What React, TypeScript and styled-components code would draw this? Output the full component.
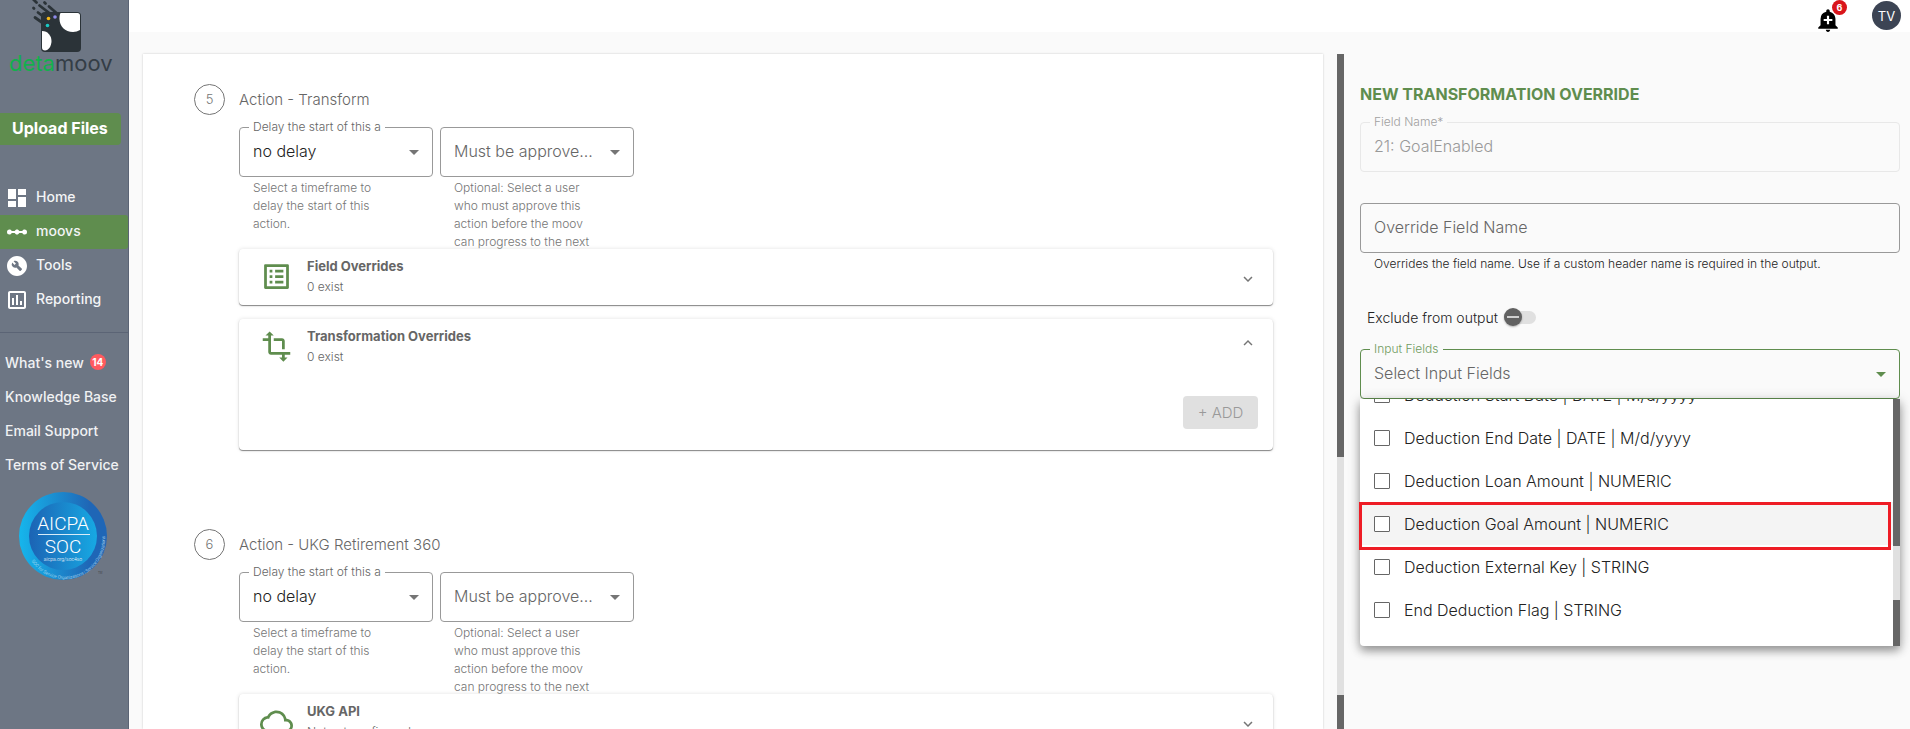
import React from "react";
import styled, { createGlobalStyle, css } from "styled-components";
import {
  MdDashboard,
  MdLinearScale,
  MdBuildCircle,
  MdOutlineAssessment,
  MdOutlineListAlt,
  MdTransform,
  MdCloudQueue,
  MdAddAlert,
  MdExpandMore,
  MdExpandLess,
} from "react-icons/md";

const green = "#5f8d4e";
const slate = "#6d7684";
const canvas = "#fafafa";

const GlobalStyle = createGlobalStyle`
  *, *::before, *::after { box-sizing: border-box; }
  body {
    margin: 0;
    background: ${canvas};
    color: #333;
    font-family: Inter, "Open Sans", sans-serif;
    font-size: 14px;
    font-weight: 300;
  }
  button, input, select { font: inherit; }
  h1, h2, h3, p, ul { margin: 0; padding: 0; }
  ul { list-style: none; }
`;

const Page = styled.div`
  display: flex;
  height: 100vh;
  overflow: hidden;
`;

/* ---------- sidebar ---------- */

const Sidebar = styled.aside`
  flex: none;
  width: 129px;
  display: flex;
  flex-direction: column;
  align-items: flex-start;
  background: ${slate};
  border-right: 1px solid #5b6475;
`;

const Brand = styled.a`
  display: block;
  width: 100%;
  height: 113px;
  text-decoration: none;
`;

const UploadButton = styled.button`
  width: 121px;
  height: 32px;
  padding: 0 0 2px 12px;
  border: 0;
  border-radius: 0 4px 4px 0;
  background: ${green};
  color: #fff;
  font-size: 16px;
  font-weight: 700;
  text-align: left;
  white-space: nowrap;
`;

const NavList = styled.ul`
  width: 100%;
  margin-top: 36px;
  padding-bottom: 15px;
  border-bottom: 1px solid #5b6475;
`;

const NavLink = styled.a<{ $active?: boolean }>`
  display: flex;
  align-items: center;
  gap: 7px;
  height: 34px;
  padding-left: 5px;
  border-radius: 0 3px 3px 0;
  background: ${(p) => (p.$active ? green : "transparent")};
  color: #f3f4f6;
  font-weight: 500;
  text-decoration: none;

  svg {
    flex: none;
    color: #fff;
  }
  span {
    padding-bottom: 4px;
  }
`;

const HelpList = styled.ul`
  margin-top: 12px;
  padding-left: 5px;
`;

const HelpLink = styled.a`
  display: flex;
  align-items: center;
  gap: 6px;
  height: 34px;
  color: #f0f1f3;
  font-size: 14px;
  font-weight: 500;
  text-decoration: none;
  white-space: nowrap;
`;

const NewCount = styled.span`
  width: 16px;
  height: 16px;
  border-radius: 50%;
  background: #ff5a5f;
  color: #fff;
  font-size: 10px;
  font-weight: 700;
  line-height: 16px;
  text-align: center;
`;

const SealLink = styled.a`
  display: block;
  margin: 9px 0 0 17px;
`;

/* ---------- frame ---------- */

const Main = styled.div`
  flex: 1;
  min-width: 0;
  display: flex;
  flex-direction: column;
`;

const TopBar = styled.header`
  flex: none;
  display: flex;
  justify-content: flex-end;
  align-items: flex-start;
  gap: 31px;
  height: 32px;
  padding-right: 9px;
  background: #fff;
`;

const AlertButton = styled.button`
  position: relative;
  width: 26px;
  height: 32px;
  padding: 7px 0 0;
  border: 0;
  background: none;
  color: #000;
`;

const AlertCount = styled.span`
  position: absolute;
  top: 0;
  right: -6px;
  width: 15px;
  height: 15px;
  border-radius: 50%;
  background: #d9151b;
  color: #fff;
  font-size: 9px;
  font-weight: 700;
  line-height: 15px;
  text-align: center;
`;

const Avatar = styled.button`
  width: 29px;
  height: 29px;
  margin-top: 1px;
  padding: 0;
  border: 0;
  border-radius: 50%;
  background: #3c4454;
  color: #fff;
  font-size: 13px;
  font-weight: 400;
`;

const Content = styled.main`
  flex: 1;
  min-height: 0;
  display: grid;
  grid-template-columns: minmax(0, 59fr) 37px minmax(0, 27fr);
  grid-template-rows: minmax(0, 1fr);
  padding: 22px 10px 0 14px;
`;

const StepsCard = styled.section`
  overflow: hidden;
  padding: 30px 50px 0 51px;
  background: #fff;
  box-shadow: 0 0 2px rgba(0, 0, 0, 0.2);
`;

const PaneScrollbar = styled.div`
  margin: 0 16px 0 14px;
  display: flex;
  flex-direction: column;
`;

const MenuScrollbar = styled.div`
  flex: none;
  width: 7px;
  display: flex;
  flex-direction: column;
`;

const ScrollPart = styled.div<{ $share: number; $thumb?: boolean }>`
  flex: ${(p) => p.$share} 1 0;
  background: ${(p) => (p.$thumb ? "#666" : "#e0e0e0")};
`;

/* ---------- steps ---------- */

const Step = styled.article`
  margin-bottom: 79px;
`;

const StepHead = styled.div`
  display: flex;
  align-items: center;
  gap: 14px;
  height: 31px;
`;

const StepNumber = styled.span`
  width: 31px;
  height: 31px;
  border: 1px solid #757575;
  border-radius: 50%;
  color: #757575;
  font-size: 13px;
  line-height: 29px;
  text-align: center;
`;

const StepTitle = styled.h2`
  color: #666;
  font-size: 15px;
  font-weight: inherit;
`;

const StepBody = styled.div`
  padding-left: 45px;
`;

const FieldRow = styled.div`
  display: flex;
  gap: 7px;
  height: 130px;
  margin-top: 4px;
  padding-top: 8px;
  overflow: hidden;
`;

/* ---------- outlined fields ---------- */

type Tone = "normal" | "disabled" | "active";

const FieldBox = styled.div<{ $wide?: boolean }>`
  position: relative;
  width: ${(p) => (p.$wide ? "100%" : "194px")};
`;

const FloatingLabel = styled.label<{ $tone?: Tone; $bg?: string }>`
  position: absolute;
  top: -8px;
  left: 10px;
  padding: 0 4px;
  background: ${(p) => p.$bg ?? canvas};
  color: ${(p) =>
    p.$tone === "active" ? "#6f9a60" : p.$tone === "disabled" ? "#a0a0a0" : "#666"};
  font-size: 12px;
  line-height: 16px;
  white-space: nowrap;
`;

const control = css<{ $tone?: Tone }>`
  display: block;
  width: 100%;
  height: 50px;
  padding: 0 40px 2px 13px;
  border: 1px solid
    ${(p) => (p.$tone === "active" ? green : p.$tone === "disabled" ? "#e8e8e8" : "#999")};
  border-radius: 4px;
  background: transparent;
  font-size: 16px;
  outline: 0;
`;

const SelectControl = styled.select<{ $tone?: Tone; $muted?: boolean }>`
  ${control}
  appearance: none;
  color: ${(p) => (p.$muted ? "#666" : "#222")};
`;

const TextControl = styled.input<{ $tone?: Tone }>`
  ${control}
  color: ${(p) => (p.$tone === "disabled" ? "#999" : "#222")};
  &::placeholder {
    color: #666;
    opacity: 1;
  }
`;

const Caret = styled.span<{ $active?: boolean }>`
  position: absolute;
  top: 23px;
  right: 14px;
  border: 5px solid transparent;
  border-bottom: 0;
  border-top-color: ${(p) => (p.$active ? green : "#757575")};
  pointer-events: none;
`;

const Hint = styled.p<{ $dark?: boolean }>`
  padding: ${(p) => (p.$dark ? "2px 14px 0" : "2px 36px 0 14px")};
  color: ${(p) => (p.$dark ? "#222" : "#757575")};
  font-size: 12px;
  line-height: 18px;
`;

/* ---------- step cards ---------- */

const Panel = styled.section`
  margin-bottom: 14px;
  border-radius: 4px;
  background: #fff;
  box-shadow: 0 1px 1px rgba(0, 0, 0, 0.45), 0 0 4px rgba(0, 0, 0, 0.12);
`;

const PanelHead = styled.button`
  display: flex;
  align-items: flex-start;
  gap: 14px;
  width: 100%;
  height: 56px;
  padding: 7px 16px 0 21px;
  border: 0;
  background: none;
  text-align: left;
`;

const PanelIcon = styled.span`
  display: flex;
  padding-top: 4px;
  color: ${green};
`;

const PanelText = styled.span`
  flex: 1;
  display: flex;
  flex-direction: column;
`;

const PanelTitle = styled.span`
  color: #666;
  font-size: 13px;
  font-weight: 700;
  line-height: 20px;
`;

const PanelNote = styled.span`
  color: #666;
  font-size: 12px;
  line-height: 22px;
`;

const Chevron = styled.span<{ $open?: boolean }>`
  display: flex;
  padding-top: ${(p) => (p.$open ? "8px" : "14px")};
  color: #757575;
`;

const PanelActions = styled.div`
  display: flex;
  justify-content: flex-end;
  padding: 21px 15px;
`;

const AddButton = styled.button`
  width: 75px;
  height: 33px;
  padding: 0;
  border: 0;
  border-radius: 4px;
  background: #e0e0e0;
  color: #999;
  font-size: 15px;
`;

/* ---------- override form ---------- */

const Form = styled.form`
  padding-top: 30px;
`;

const FormTitle = styled.h1`
  margin-bottom: 18px;
  color: ${green};
  font-size: 16px;
  font-weight: 700;
  line-height: 20px;
`;

const FormField = styled.div`
  margin-bottom: 31px;
`;

const ToggleRow = styled.label`
  display: flex;
  align-items: center;
  gap: 6px;
  height: 20px;
  margin: 34px 0 22px;
  padding-left: 7px;
  font-size: 14px;
  color: #222;
`;

const Toggle = styled.input`
  appearance: none;
  position: relative;
  width: 32px;
  height: 13px;
  margin: 0;
  border-radius: 7px;
  background: #e0e0e0;

  &::before {
    content: "";
    position: absolute;
    top: -3px;
    left: 0;
    width: 18px;
    height: 18px;
    border-radius: 50%;
    background: linear-gradient(#d0d0d0, #d0d0d0) center / 12px 2px no-repeat #616161;
    box-shadow: 0 1px 2px rgba(0, 0, 0, 0.3);
  }
`;

const Menu = styled.div`
  position: absolute;
  top: 50px;
  left: 0;
  right: 0;
  display: flex;
  height: 247px;
  border-radius: 0 0 4px 4px;
  background: #fff;
  box-shadow: 0 5px 8px rgba(0, 0, 0, 0.3), 0 2px 14px rgba(0, 0, 0, 0.2);
`;

const OptionList = styled.ul`
  flex: 1;
  min-width: 0;
  display: flex;
  flex-direction: column;
  justify-content: flex-end;
  overflow: hidden;
  padding-bottom: 15px;
`;

const OptionRow = styled.li<{ $hover?: boolean }>`
  flex: none;
  height: 43px;
  background: ${(p) => (p.$hover ? "#f4f4f4" : "#fff")};
`;

const OptionLabel = styled.label`
  display: flex;
  align-items: center;
  gap: 14px;
  height: 100%;
  padding-left: 14px;
  color: #222;
  font-size: 16px;
`;

const Tick = styled.input`
  appearance: none;
  width: 16px;
  height: 16px;
  margin: 0;
  border: 1px solid #666;
  border-radius: 1px;
  background: #fff;
`;

const Highlight = styled.div`
  position: absolute;
  top: 103px;
  left: -1px;
  right: 9px;
  height: 48px;
  border: 3px solid #ee1c25;
  pointer-events: none;
`;

/* ---------- drawings ---------- */

const Logo = () => (
  <svg width="128" height="80" viewBox="0 0 128 80" role="img" aria-label="detamoov">
    <rect x="41" y="12" width="40" height="40" rx="4" fill="#2b3338" />
    <path d="M60.500 13h17q2.500 0 2.500 2.500v14.500a13 13 0 0 1-7 2c-8 0-13.500-6-13.500-13 0-2 0-4 1-6z" fill="#fff" />
    <path d="M42 31c6 0 9.500 5 9.500 10s-3 9.500-6.500 9.500q-3 0-3-3z" fill="#fff" />
    <g stroke="#2b3338" strokeWidth="2.800" strokeLinecap="round" fill="none">
      <path d="M33-1l3.500 3.500" />
      <path d="M33.500 8l.5.5" />
      <path d="M39.500 5.500L55 17.500" />
      <path d="M44.500 2.500l1 1" />
      <path d="M49 6.500L57 13.500" />
      <path d="M38 12.500L48.500 20.500" />
      <path d="M35 17.500L47 26" />
    </g>
    <circle cx="48.500" cy="18.500" r="1.800" fill="#f6b817" />
    <circle cx="55" cy="17" r="1.800" fill="#8f8bea" />
    <circle cx="47.500" cy="25.500" r="1.800" fill="#19c9c4" />
    <text x="9" y="71" fontFamily="Inter, sans-serif" fontSize="22" fontWeight="400">
      <tspan fill="#12b04c">deta</tspan>
      <tspan fill="#343d46">moov</tspan>
    </text>
  </svg>
);

const Seal = () => (
  <svg width="92" height="92" viewBox="17 491 92 92" role="img" aria-label="AICPA SOC">
    <defs>
      <linearGradient id="sealRing" x1="0" x2="1">
        <stop offset="0" stopColor="#16b6ec" />
        <stop offset="0.8" stopColor="#1f66b6" />
      </linearGradient>
      <linearGradient id="sealCore" x1="0" x2="1">
        <stop offset="0" stopColor="#1c63b4" />
        <stop offset="1" stopColor="#17a9e3" />
      </linearGradient>
      <path id="sealArc" d="M31.500 562A40 40 0 0 0 102 525" />
    </defs>
    <circle cx="63" cy="537" r="44" fill="url(#sealRing)" />
    <circle cx="63" cy="537" r="34" fill="url(#sealCore)" />
    <g fill="#fff" fontFamily="Roboto, sans-serif" textAnchor="middle">
      <text x="63" y="531" fontSize="19" fontWeight="300">AICPA</text>
      <text x="63" y="554" fontSize="19" fontWeight="300">SOC</text>
      <text x="63" y="562" fontSize="5">aicpa.org/soc4so</text>
    </g>
    <path d="M38 535.500h52" stroke="#d7ecf8" strokeWidth="1" />
    <text fill="#cfe6f7" fontFamily="Roboto, sans-serif" fontSize="4.500">
      <textPath href="#sealArc">SOC for Service Organizations | Service Organizations</textPath>
    </text>
    <text x="98" y="575" fill="#333" fontFamily="Roboto, sans-serif" fontSize="3">TM</text>
  </svg>
);

/* ---------- parts ---------- */

const nav = [
  { label: "Home", Icon: MdDashboard },
  { label: "moovs", Icon: MdLinearScale, active: true },
  { label: "Tools", Icon: MdBuildCircle },
  { label: "Reporting", Icon: MdOutlineAssessment },
];

const help = [
  { label: "What's new", count: 14 },
  { label: "Knowledge Base" },
  { label: "Email Support" },
  { label: "Terms of Service" },
];

const options = [
  "Deduction Start Date | DATE | M/d/yyyy",
  "Deduction End Date | DATE | M/d/yyyy",
  "Deduction Loan Amount | NUMERIC",
  "Deduction Goal Amount | NUMERIC",
  "Deduction External Key | STRING",
  "End Deduction Flag | STRING",
];

interface ActionStepProps {
  number: number;
  title: string;
  children: React.ReactNode;
}

const ActionStep = ({ number, title, children }: ActionStepProps) => (
  <Step>
    <StepHead>
      <StepNumber>{number}</StepNumber>
      <StepTitle>{title}</StepTitle>
    </StepHead>
    <StepBody>
      <FieldRow>
        <FieldBox>
          <FloatingLabel $bg="#fff" htmlFor={`delay-${number}`}>
            Delay the start of this a
          </FloatingLabel>
          <SelectControl id={`delay-${number}`}>
            <option>no delay</option>
          </SelectControl>
          <Caret />
          <Hint>Select a timeframe to delay the start of this action.</Hint>
        </FieldBox>
        <FieldBox>
          <SelectControl $muted aria-label="Must be approved by">
            <option>Must be approve...</option>
          </SelectControl>
          <Caret />
          <Hint>
            Optional: Select a user who must approve this action before the moov can progress to
            the next
          </Hint>
        </FieldBox>
      </FieldRow>
      {children}
    </StepBody>
  </Step>
);

interface StepPanelProps {
  icon: React.ReactNode;
  title: string;
  note: string;
  children?: React.ReactNode;
}

const StepPanel = ({ icon, title, note, children }: StepPanelProps) => (
  <Panel>
    <PanelHead type="button" aria-expanded={Boolean(children)}>
      <PanelIcon>{icon}</PanelIcon>
      <PanelText>
        <PanelTitle>{title}</PanelTitle>
        <PanelNote>{note}</PanelNote>
      </PanelText>
      <Chevron $open={Boolean(children)}>
        {children ? <MdExpandLess size={18} /> : <MdExpandMore size={18} />}
      </Chevron>
    </PanelHead>
    {children}
  </Panel>
);

export default function App() {
  return (
    <>
      <GlobalStyle />
      <Page>
        <Sidebar>
          <Brand href="#">
            <Logo />
          </Brand>
          <UploadButton type="button">Upload Files</UploadButton>
          <NavList>
            {nav.map(({ label, Icon, active }) => (
              <li key={label}>
                <NavLink href="#" $active={active}>
                  <Icon size={24} />
                  <span>{label}</span>
                </NavLink>
              </li>
            ))}
          </NavList>
          <HelpList>
            {help.map(({ label, count }) => (
              <li key={label}>
                <HelpLink href="#">
                  {label}
                  {count && <NewCount>{count}</NewCount>}
                </HelpLink>
              </li>
            ))}
          </HelpList>
          <SealLink href="#">
            <Seal />
          </SealLink>
        </Sidebar>

        <Main>
          <TopBar>
            <AlertButton type="button" aria-label="Notifications">
              <MdAddAlert size={26} />
              <AlertCount>6</AlertCount>
            </AlertButton>
            <Avatar type="button">TV</Avatar>
          </TopBar>

          <Content>
            <StepsCard>
              <ActionStep number={5} title="Action - Transform">
                <StepPanel
                  icon={<MdOutlineListAlt size={33} />}
                  title="Field Overrides"
                  note="0 exist"
                />
                <StepPanel
                  icon={<MdTransform size={33} />}
                  title="Transformation Overrides"
                  note="0 exist"
                >
                  <PanelActions>
                    <AddButton type="button" disabled>
                      + ADD
                    </AddButton>
                  </PanelActions>
                </StepPanel>
              </ActionStep>
              <ActionStep number={6} title="Action - UKG Retirement 360">
                <StepPanel
                  icon={<MdCloudQueue size={33} />}
                  title="UKG API"
                  note="Not yet configured"
                />
              </ActionStep>
            </StepsCard>

            <PaneScrollbar aria-hidden="true">
              <ScrollPart $share={403} $thumb />
              <ScrollPart $share={238} />
              <ScrollPart $share={34} $thumb />
            </PaneScrollbar>

            <Form>
              <FormTitle>NEW TRANSFORMATION OVERRIDE</FormTitle>
              <FormField>
                <FieldBox $wide>
                  <FloatingLabel $tone="disabled" htmlFor="field-name">
                    Field Name*
                  </FloatingLabel>
                  <TextControl
                    id="field-name"
                    $tone="disabled"
                    defaultValue="21: GoalEnabled"
                    disabled
                  />
                </FieldBox>
              </FormField>
              <FieldBox $wide>
                <TextControl
                  aria-label="Override Field Name"
                  placeholder="Override Field Name"
                />
                <Hint $dark>
                  Overrides the field name. Use if a custom header name is required in the output.
                </Hint>
              </FieldBox>
              <ToggleRow>
                Exclude from output
                <Toggle type="checkbox" role="switch" />
              </ToggleRow>
              <FieldBox $wide>
                <FloatingLabel $tone="active" htmlFor="input-fields">
                  Input Fields
                </FloatingLabel>
                <SelectControl id="input-fields" $tone="active" $muted>
                  <option>Select Input Fields</option>
                </SelectControl>
                <Caret $active />
                <Menu>
                  <OptionList>
                    {options.map((option, i) => (
                      <OptionRow key={option} $hover={i === 3}>
                        <OptionLabel>
                          <Tick type="checkbox" />
                          {option}
                        </OptionLabel>
                      </OptionRow>
                    ))}
                  </OptionList>
                  <MenuScrollbar aria-hidden="true">
                    <ScrollPart $share={147} $thumb />
                    <ScrollPart $share={54} />
                    <ScrollPart $share={46} $thumb />
                  </MenuScrollbar>
                  <Highlight />
                </Menu>
              </FieldBox>
            </Form>
          </Content>
        </Main>
      </Page>
    </>
  );
}
